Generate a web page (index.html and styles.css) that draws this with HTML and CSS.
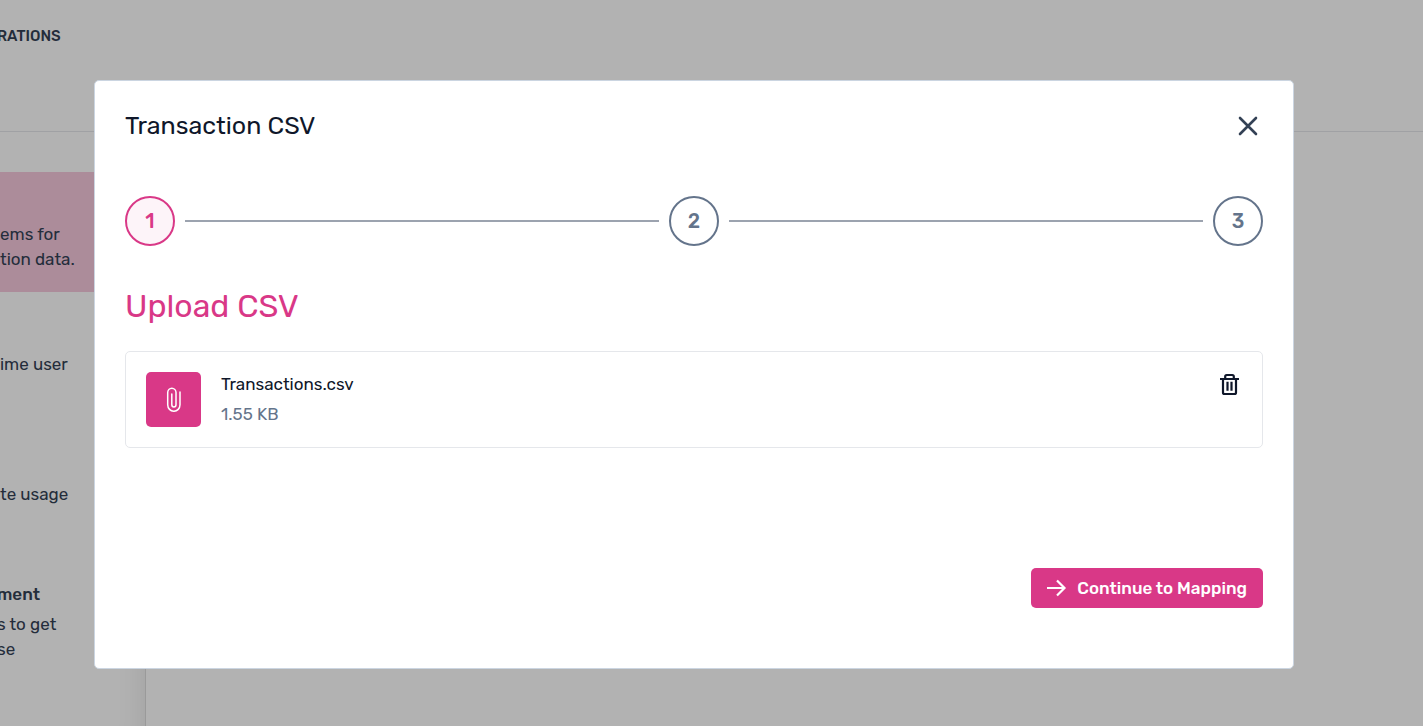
FILE: index.html
```html
<!DOCTYPE html>
<html lang="en">
<head>
    <meta charset="UTF-8">
    <meta name="viewport" content="width=device-width, initial-scale=1.0">
    <title>Transaction CSV</title>
    <link rel="stylesheet" href="styles.css">
</head>
<body>
    <header class="topbar">
        <span class="crumb">RATIONS</span>
    </header>
    <div class="layout">
        <aside class="sidebar">
            <div class="source active">
                <p>ems for<br>tion data.</p>
            </div>
            <div class="source">
                <p>ime user</p>
            </div>
            <div class="source">
                <p>te usage</p>
            </div>
            <div class="source">
                <h3>ment</h3>
                <p>s to get<br>se</p>
            </div>
        </aside>
        <main class="content"></main>
    </div>

    <!-- Upload modal -->
    <div class="overlay">
        <div class="modal" role="dialog" aria-modal="true" aria-labelledby="modalTitle">
            <div class="modal-header">
                <h1 id="modalTitle">Transaction CSV</h1>
                <button type="button" class="icon-btn close-btn" aria-label="Close">
                    <svg width="30" height="30" viewBox="0 0 30 30" fill="none" stroke="currentColor" stroke-width="2.6" stroke-linecap="round">
                        <path d="M7 7L23 23M23 7L7 23"/>
                    </svg>
                </button>
            </div>

            <div class="steps">
                <span class="step current">1</span>
                <span class="step-line"></span>
                <span class="step">2</span>
                <span class="step-line"></span>
                <span class="step">3</span>
            </div>

            <h2>Upload CSV</h2>

            <div class="file-card">
                <div class="file-icon">
                    <svg width="25" height="25" viewBox="0 0 25 25" fill="none" stroke="currentColor" stroke-width="1.5" stroke-linecap="round">
                        <path d="M19 5V17.8A6 6.3 0 0 1 6.7 17.8V5.5A4 4.2 0 0 1 15 5.5V17.5A2 2.4 0 0 1 10.8 17.5V7"/>
                    </svg>
                </div>
                <div class="file-info">
                    <p class="file-name">Transactions.csv</p>
                    <p class="file-size">1.55 KB</p>
                </div>
                <button type="button" class="icon-btn delete-btn" aria-label="Delete file">
                    <svg width="25" height="25" viewBox="0 0 25 25" fill="none" stroke="currentColor" stroke-width="2.2">
                        <path d="M3 7H22M6 7V20.5Q6 22 7.5 22H17.5Q19 22 19 20.5V7M8.2 7V4.5Q8.2 3 9.7 3H15.3Q16.8 3 16.8 4.5V7M10.5 9.8V18.8M14.5 9.8V18.8"/>
                    </svg>
                </button>
            </div>

            <div class="modal-footer">
                <button type="button" class="continue-btn">
                    <svg width="20" height="20" viewBox="0 0 20 20" fill="none" stroke="currentColor" stroke-width="2.2">
                        <path d="M0 10H18M10 2.5L17.5 10L10 17.5"/>
                    </svg>
                    Continue to Mapping
                </button>
            </div>
        </div>
    </div>
</body>
</html>
```
FILE: styles.css
```css
* {
    box-sizing: border-box;
}
body {
    font-family: Rubik, Roboto, sans-serif;
    font-size: 17px;
    line-height: 25px;
    margin: 0;
    height: 100vh;
    display: flex;
    flex-direction: column;
    overflow: hidden;
    background-color: #ffffff;
    color: #334155;
}
h1, h2, h3, p {
    margin: 0;
}
button {
    font: inherit;
    border: none;
    cursor: pointer;
}
svg {
    display: block;
}

/* Page behind the modal */
.topbar {
    flex: none;
    height: 132px;
    padding-top: 23px;
    border-bottom: 1px solid #e5e7eb;
}
.crumb {
    margin-left: -3px;
    font-size: 15px;
    font-weight: 500;
}
.layout {
    flex: 1;
    display: flex;
    min-height: 0;
}
.sidebar {
    flex: none;
    width: 146px;
    padding-top: 40px;
    display: flex;
    flex-direction: column;
    gap: 10px;
    border-right: 1px solid #dddddd;
    box-shadow: inset -30px 0 25px -25px rgba(0, 0, 0, 0.08);
}
.source {
    display: grid;
    grid-template-rows: 25px 50px;
    gap: 5px;
    padding: 20px 0;
}
.source.active {
    background-color: #f6c9dd;
}
.source:last-child {
    margin-left: -3px;
}
.source h3 {
    font-size: 17px;
    font-weight: 500;
}
.source p {
    grid-row: 2;
}
.content {
    flex: 1;
}

/* Modal */
.overlay {
    position: fixed;
    inset: 0;
    display: flex;
    justify-content: center;
    align-items: flex-start;
    padding: 80px 35px 0 0;
    background-color: rgba(0, 0, 0, 0.3);
}
.modal {
    width: 100%;
    max-width: 1200px;
    padding: 30px 30px 60px;
    background-color: #ffffff;
    border: 1px solid #cbd5e1;
    border-radius: 5px;
    color: #0f172a;
}
.modal-header {
    display: flex;
    justify-content: space-between;
    align-items: center;
    margin-bottom: 55px;
}
.modal-header h1 {
    font-size: 25px;
    font-weight: 400;
    line-height: 30px;
}
.icon-btn {
    padding: 0;
    background: none;
    color: #0f172a;
}
.close-btn {
    color: #334155;
}

.steps {
    display: flex;
    align-items: center;
    gap: 10px;
    margin-bottom: 40px;
}
.step {
    flex: none;
    display: flex;
    justify-content: center;
    align-items: center;
    width: 50px;
    height: 50px;
    border: 2px solid #64748b;
    border-radius: 50%;
    color: #64748b;
    font-size: 20px;
    font-weight: 500;
}
.step.current {
    border-color: #d93887;
    background-color: #fdf4f9;
    color: #d93887;
}
.step-line {
    flex: 1;
    height: 2px;
    background-color: #9ca3af;
}

.modal h2 {
    margin-bottom: 25px;
    font-size: 32px;
    font-weight: 400;
    line-height: 40px;
    color: #d93887;
}
.file-card {
    display: flex;
    align-items: flex-start;
    gap: 20px;
    padding: 20px;
    border: 1px solid #e5e7eb;
    border-radius: 5px;
}
.file-icon {
    display: flex;
    justify-content: center;
    align-items: center;
    width: 55px;
    height: 55px;
    border-radius: 5px;
    background-color: #d93887;
    color: #ffffff;
}
.file-info {
    flex: 1;
    display: flex;
    flex-direction: column;
    gap: 5px;
}
.file-size {
    color: #64748b;
}
.modal-footer {
    display: flex;
    justify-content: flex-end;
    margin-top: 120px;
}
.continue-btn {
    display: flex;
    align-items: center;
    gap: 10px;
    height: 40px;
    padding: 0 16px;
    border-radius: 5px;
    background-color: #d93887;
    color: #ffffff;
    font-weight: 500;
}
```
